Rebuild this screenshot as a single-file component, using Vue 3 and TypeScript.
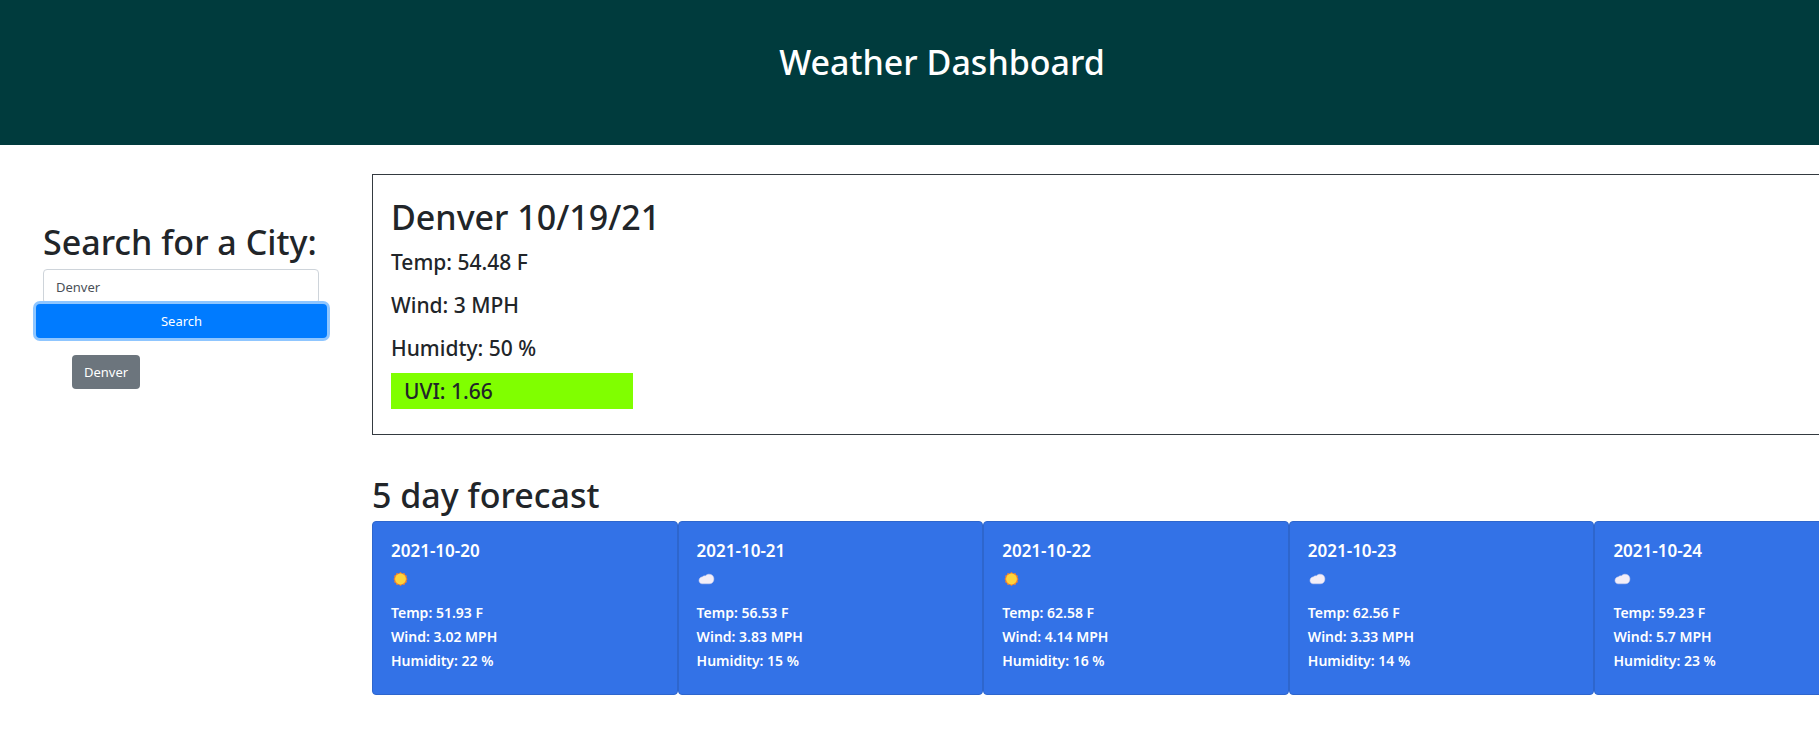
<script setup lang="ts">
import { onMounted, ref } from 'vue'

interface Day {
  date: string
  sky: 'sun' | 'cloud'
  temp: string
  wind: string
  humidity: string
}

const city = ref('Denver')
const history = ref<string[]>(['Denver'])
const searchButton = ref<HTMLButtonElement | null>(null)

const days: Day[] = [
  { date: '2021-10-20', sky: 'sun', temp: '51.93', wind: '3.02', humidity: '22' },
  { date: '2021-10-21', sky: 'cloud', temp: '56.53', wind: '3.83', humidity: '15' },
  { date: '2021-10-22', sky: 'sun', temp: '62.58', wind: '4.14', humidity: '16' },
  { date: '2021-10-23', sky: 'cloud', temp: '62.56', wind: '3.33', humidity: '14' },
  { date: '2021-10-24', sky: 'cloud', temp: '59.23', wind: '5.7', humidity: '23' },
]

function search() {
  const name = city.value.trim()
  if (name && !history.value.includes(name)) history.value.push(name)
}

onMounted(() => searchButton.value?.focus())
</script>

<template>
  <div class="page">
    <header class="banner">
      <h1>Weather Dashboard</h1>
    </header>
    <div class="layout">
      <aside class="sidebar">
        <form class="search" @submit.prevent="search">
          <h2><label for="city">Search for a City:</label></h2>
          <input id="city" v-model="city" type="text" autocomplete="off" />
          <button ref="searchButton" class="submit" type="submit">Search</button>
        </form>
        <div class="history">
          <button v-for="name in history" :key="name" type="button" @click="city = name">{{ name }}</button>
        </div>
      </aside>
      <main>
        <section class="current">
          <h2>Denver 10/19/21</h2>
          <p>Temp: 54.48 F</p>
          <p>Wind: 3 MPH</p>
          <p>Humidty: 50 %</p>
          <p class="uvi">UVI: 1.66</p>
        </section>
        <section class="forecast">
          <h2>5 day forecast</h2>
          <div class="cards">
            <article v-for="day in days" :key="day.date" class="card">
              <h3>{{ day.date }}</h3>
              <svg v-if="day.sky === 'sun'" class="sky" viewBox="0 0 20 32" aria-hidden="true">
                <path
                  fill="#f5852a"
                  d="M9.5 9 11.2 10.5 13.4 10.1 14.2 12 15.9 12.8 15.5 14.7 16.5 16 15.5 17.5 15.9 19.3 14.2 20.1 13.4 21.9 11.2 21.5 9.5 23 7.8 21.5 5.6 21.9 4.8 20.1 3.1 19.3 3.5 17.5 2.5 16 3.5 14.5 3.1 12.8 4.8 12 5.6 10.1 7.8 10.5Z"
                />
                <circle cx="9.5" cy="16" r="5.4" fill="#ffd43b" />
              </svg>
              <svg v-else class="sky" viewBox="0 0 20 32" aria-hidden="true">
                <path
                  fill="#f3eef8"
                  stroke="#c9cdec"
                  stroke-width=".5"
                  d="M5.2 20.8C3.4 20.8 2 19.5 2 17.6 2 15.5 3.3 14 5.5 13.7 6.3 12.9 7.3 12.7 8.3 12.9 9.2 11.7 10.5 11.2 12.1 11.2 14.9 11.2 16.9 13.1 16.9 15.9 16.9 18.8 15 20.8 12.4 20.8Z"
                />
              </svg>
              <p>Temp: {{ day.temp }} F</p>
              <p>Wind: {{ day.wind }} MPH</p>
              <p>Humidity: {{ day.humidity }} %</p>
            </article>
          </div>
        </section>
      </main>
    </div>
  </div>
</template>

<style>
body {
  margin: 0;
  background: #fff;
}
</style>

<style scoped>
.page {
  overflow: hidden;
  color: #212529;
  font-family: 'Segoe UI', 'Noto Sans', sans-serif;
  font-size: 14px;
  line-height: 24px;
}
h1,
h2,
h3,
p {
  margin: 0;
  font-weight: 500;
}
h1,
h2 {
  font-size: 34px;
  line-height: 48px;
  white-space: nowrap;
}
.banner {
  padding: 38px 0 59px 65px;
  background: #003b3d;
  color: #fff;
  text-align: center;
}
.layout {
  display: grid;
  grid-template-columns: 372px minmax(0, 1fr);
  margin-right: -81px;
}
.sidebar {
  padding: 73px 45px 0 36px;
}
.search {
  display: flex;
  flex-direction: column;
}
.search h2 {
  margin: 0 7px 3px;
}
.search input {
  box-sizing: border-box;
  height: 35px;
  margin: 0 8px 0 7px;
  padding: 0 12px;
  border: 1px solid #ced4da;
  border-radius: 4px;
  background: #fff;
  color: #495057;
  font: inherit;
  font-size: 13px;
}
button {
  height: 34px;
  padding: 0 12px;
  border: 0;
  border-radius: 4px;
  color: #fff;
  font: inherit;
  font-size: 13px;
  cursor: pointer;
}
.submit {
  position: relative;
  background: #007bff;
}
.submit:focus {
  outline: 0;
  box-shadow: 0 0 0 3px #8fc6ff;
}
.history {
  display: flex;
  flex-direction: column;
  align-items: flex-start;
  gap: 8px;
  padding: 17px 36px 0;
}
.history button {
  background: #6c757d;
}
main {
  padding-top: 29px;
}
.current {
  padding: 18px 18px 25px;
  border: 1px solid #343a40;
}
.current h2 {
  margin-bottom: 3px;
}
.current p {
  font-size: 21px;
  line-height: 36px;
}
.current p + p {
  margin-top: 7px;
}
.current .uvi {
  box-sizing: border-box;
  width: 242px;
  padding-left: 13px;
  background: #80ff00;
}
.forecast {
  padding-top: 36px;
}
.forecast h2 {
  margin-bottom: 2px;
}
.cards {
  display: grid;
  grid-template-columns: repeat(5, minmax(0, 1fr));
}
.card {
  padding: 17px 18px 21px;
  border: 1px solid #2e66cd;
  border-radius: 4px;
  background: #3372e7;
  color: #fff;
}
.card h3 {
  font-size: 17px;
  font-weight: 600;
}
.card p {
  font-weight: 600;
}
.sky {
  display: block;
  width: 20px;
  height: 32px;
  margin-bottom: 6px;
}
</style>
